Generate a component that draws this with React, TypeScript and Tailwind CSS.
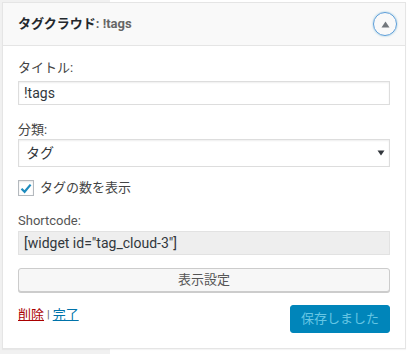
import React from "react";

const font = "font-['Roboto','Noto_Sans_CJK_JP',sans-serif]";

export default function App() {
  return (
    <div
      className={`w-[410px] h-[354px] overflow-hidden pt-[2px] pl-[2px] bg-[linear-gradient(to_right,#f1f1f1_110px,#ffffff_110px)] ${font}`}
    >
      <div className="w-[404px] h-[347px] border border-[#e5e5e5] bg-white shadow-[0_1px_1px_rgba(0,0,0,0.04)] flex flex-col">
        <div className="h-[43px] shrink-0 bg-[#f9f9f9] border-b border-[#e5e5e5] flex items-center justify-between pl-[15px] pr-[8px]">
          <div className="text-[13px] font-bold text-[#23282d] leading-[18px]">
            タグクラウド<span className="text-[#666]">: !tags</span>
          </div>
          <div className="w-[24px] h-[24px] rounded-full border-[1.5px] border-[#5b9dd9] flex items-center justify-center shadow-[0_0_2px_rgba(30,140,190,0.5)]">
            <svg width="9" height="7" viewBox="0 0 9 7">
              <path d="M4.5 0.5 L8.5 6.5 L0.5 6.5 Z" fill="#72777c" />
            </svg>
          </div>
        </div>
        <div className="px-[15px] flex flex-col">
          <div className="mt-[13px] text-[13px] leading-[18px] text-[#444]">タイトル:</div>
          <div className="mt-[4px] h-[24px] border border-[#ddd] shadow-[inset_0_1px_2px_rgba(0,0,0,0.07)] bg-white flex items-center px-[5px] text-[14px] text-[#32373c]">
            !tags
          </div>
          <div className="mt-[16px] text-[13px] leading-[18px] text-[#444]">分類:</div>
          <div className="h-[28px] border border-[#ddd] shadow-[inset_0_1px_2px_rgba(0,0,0,0.07)] bg-white flex items-center justify-between pl-[7px] pr-[4px] text-[14px] text-[#32373c]">
            <span>タグ</span>
            <svg width="8" height="6" viewBox="0 0 8 6">
              <path d="M0.5 0.5 L7.5 0.5 L4 5.5 Z" fill="#32373c" />
            </svg>
          </div>
          <div className="mt-[12px] h-[18px] flex items-center gap-[6px]">
            <div className="w-[16px] h-[16px] border border-[#b4b9be] bg-white shadow-[inset_0_1px_2px_rgba(0,0,0,0.1)] flex items-center justify-center">
              <svg width="12" height="11" viewBox="0 0 12 11">
                <path d="M1.5 5.8 L4.6 8.8 L10.6 1.6" stroke="#1e8cbe" strokeWidth="2.2" fill="none" />
              </svg>
            </div>
            <span className="text-[13px] text-[#444]">タグの数を表示</span>
          </div>
          <div className="mt-[15px] text-[13px] leading-[18px] text-[#555]">Shortcode:</div>
          <div className="mt-[1px] h-[24px] bg-[#eee] border border-[#e2e2e2] flex items-center px-[5px] text-[14px] text-[#32373c]">
            [widget id="tag_cloud-3"]
          </div>
          <div className="mt-[13px] h-[24px] border border-[#ccc] rounded-[3px] bg-[#f7f7f7] shadow-[0_1px_0_#ccc] flex items-center justify-center text-[13px] text-[#555]">
            表示設定
          </div>
          <div className="mt-[13px] flex items-start justify-between">
            <div className="mt-[1px] text-[13px] leading-[18px] flex items-center gap-[3px]">
              <span className="text-[#a00] underline">削除</span>
              <span className="text-[#666] text-[11px]">|</span>
              <span className="text-[#0073aa] underline">完了</span>
            </div>
            <div className="w-[100px] h-[28px] rounded-[3px] bg-[#0085ba] border border-[#0085ba] flex items-center justify-center text-[13px] text-[#66c6e4]">
              保存しました
            </div>
          </div>
        </div>
      </div>
    </div>
  );
}
